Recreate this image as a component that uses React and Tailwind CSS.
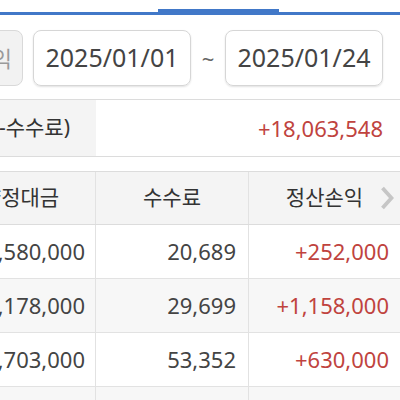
import React from "react";

const font = { fontFamily: '"Noto Sans", "Noto Sans CJK KR", sans-serif' };

const rows = [
  ["1,580,000", "20,689", "+252,000"],
  ["3,178,000", "29,699", "+1,158,000"],
  ["2,703,000", "53,352", "+630,000"],
  ["", "", ""],
];

export default function App() {
  return (
    <div className="w-[400px] h-[400px] overflow-hidden bg-white" style={font}>
      {/* tab underline */}
      <div className="flex items-end h-[15px]">
        <div className="w-[158px] h-[3px] bg-[#4178c8]" />
        <div className="w-[121px] h-[6px] bg-[#4178c8]" />
        <div className="flex-1 h-[3px] bg-[#4178c8]" />
      </div>

      {/* date range row */}
      <div className="mt-[15px] flex items-center h-[56px] ml-[-47px]">
        <div className="w-[70px] h-[56px] rounded-[8px] border border-[#d9d9d9] bg-[#f2f2f2] flex items-center justify-end pr-[10px] text-[22px] text-[#9a9a9a]">
          손익
        </div>
        <div className="ml-[10px] w-[158px] h-[56px] rounded-[8px] border border-[#d6d6d6] shadow-[0_1px_2px_rgba(0,0,0,0.12)] flex items-center justify-center text-[25px] text-[#444]">
          2025/01/01
        </div>
        <div className="w-[34px] flex items-center justify-center text-[22px] text-[#666]">~</div>
        <div className="w-[158px] h-[56px] rounded-[8px] border border-[#d6d6d6] shadow-[0_1px_2px_rgba(0,0,0,0.12)] flex items-center justify-center text-[25px] text-[#444]">
          2025/01/24
        </div>
      </div>

      {/* summary row */}
      <div className="mt-[13px] flex h-[58px] border-y border-[#dcdcdc]">
        <div className="w-[96px] bg-[#f4f4f4] flex items-center justify-end pr-[26px] text-[21px] text-[#333] whitespace-nowrap overflow-hidden">
          -수수료)
        </div>
        <div className="flex-1 flex items-center justify-end pr-[17px] text-[22px] text-[#c0433e]">
          +18,063,548
        </div>
      </div>

      {/* table */}
      <div className="mt-[14px] ml-[-54px] w-[454px]">
        <div className="relative grid grid-cols-[150px_153px_151px] h-[54px] border-y border-[#dcdcdc] bg-[#f4f4f4] text-[21px] text-[#333]">
          <div className="flex items-center justify-center border-r border-[#e2e2e2]">약정대금</div>
          <div className="flex items-center justify-center border-r border-[#e2e2e2]">수수료</div>
          <div className="flex items-center justify-center">정산손익</div>
          <svg
            className="absolute right-[6px] top-[14px]"
            width="14"
            height="24"
            viewBox="0 0 14 24"
          >
            <path d="M2.5 2 L11.5 12 L2.5 22" fill="none" stroke="#c6c6c6" strokeWidth="3.8" strokeLinejoin="miter" />
          </svg>
        </div>
        {rows.map((r, i) => (
          <div
            key={i}
            className={
              "grid grid-cols-[150px_153px_151px] h-[54px] border-b border-[#e2e2e2] text-[22px] " +
              (i % 2 === 1 ? "bg-[#f7f7f7]" : "bg-white")
            }
          >
            <div className="flex items-center justify-end pr-[10px] border-r border-[#e2e2e2] text-[#444]">{r[0]}</div>
            <div className="flex items-center justify-end pr-[12px] border-r border-[#e2e2e2] text-[#444]">{r[1]}</div>
            <div className="flex items-center justify-end pr-[11px] text-[#c0433e]">{r[2]}</div>
          </div>
        ))}
      </div>
    </div>
  );
}
